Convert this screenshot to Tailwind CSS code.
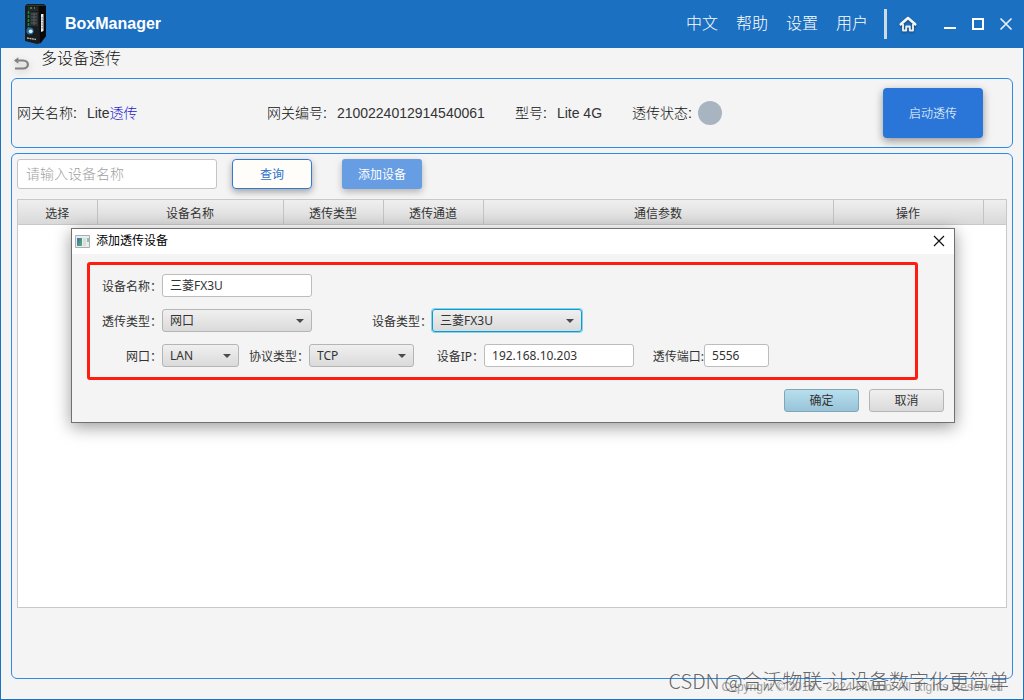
<!DOCTYPE html>
<html lang="zh-CN">
<head>
<meta charset="utf-8">
<meta name="viewport" content="width=device-width, initial-scale=1">
<title>BoxManager</title>
<script src="https://cdn.jsdelivr.net/npm/@tailwindcss/browser@4"></script>
</head>
<body class="relative flex min-h-screen flex-col border-x border-b border-[#1c70c1] bg-[#f4f4f4] font-['Liberation_Sans','Noto_Sans_CJK_SC',sans-serif] text-sm text-[#333]">
  <header class="flex h-12 shrink-0 items-center bg-[#1c70c1] pr-[9px] pl-6 text-white">
    <svg class="h-10 w-[21px]" viewBox="0 0 21 40" aria-hidden="true">
      <path d="M0 2 2 0h17l2 2v30l-5 7-4 1-12-3z" fill="#191b1d"/>
      <path d="M14 1l7 1v30l-6 7z" fill="#08090a"/>
      <path d="M2 1h17l1 1H1z" fill="#303537"/>
      <path d="M3 3h10v4H3z" fill="#24292b"/>
      <path d="M5 8h8v14H5z" fill="#2b3033"/>
      <path d="M6 10h6M6 13h6M6 16h6M6 19h6M9 9v12" stroke="#555c60"/>
      <path d="M3.500 7v17" stroke="#168a49" stroke-width="1.600" stroke-dasharray="3 1"/>
      <path d="M5 4h2M9 4h1" stroke="#52963a" stroke-width="1.500"/>
      <circle cx="5" cy="27" r="3.600" fill="#236fa9"/>
      <circle cx="5.700" cy="27.300" r="1.900" fill="#e2ebf3"/>
      <path d="M2 34l9 1.500" stroke="#b4babd" stroke-width="1.300" stroke-dasharray="2 .5"/>
      <path d="M16 10h2.500v17l-2.500 1z" fill="#ececec"/>
      <path d="M17.200 13v12" stroke="#59636a" stroke-width=".8" stroke-dasharray="1.500 1"/>
    </svg>
    <h1 class="ml-[19px] text-base font-bold">BoxManager</h1>
    <nav class="ml-auto flex items-center gap-[18px] text-base font-light">
      <a href="#">中文</a><a href="#">帮助</a><a href="#">设置</a><a href="#">用户</a>
    </nav>
    <span class="ml-4 h-[30px] w-[3px] bg-[#cbdbe8]"></span>
    <button class="ml-3 size-[18px]" aria-label="主页">
      <svg viewBox="0 0 18 18" class="size-[18px] drop-shadow-[0_1px_1px_#0006]"><path d="M1.800 9.300 9 3l7.200 6.300" fill="none" stroke="#f7f7f7" stroke-width="2.600" stroke-linecap="round" stroke-linejoin="round"/><path d="M4 9v6.500h3.200V11.500h3.600v4H14V9" fill="none" stroke="#ededed" stroke-width="1.900" stroke-linejoin="round"/></svg>
    </button>
    <button class="ml-[25px] size-4" aria-label="最小化"><svg viewBox="0 0 16 16" class="size-4"><path d="M2 12h12" stroke="#fff" stroke-width="2"/></svg></button>
    <button class="ml-3 size-4" aria-label="最大化"><svg viewBox="0 0 16 16" class="size-4"><path d="M3 3h10v10H3z" fill="none" stroke="#fff" stroke-width="2"/></svg></button>
    <button class="ml-3 size-4" aria-label="关闭窗口"><svg viewBox="0 0 16 16" class="size-4"><path d="m2.500 2.500 11 11m0-11-11 11" stroke="#e8eef5" stroke-width="1.700"/></svg></button>
  </header>

  <main class="flex grow flex-col px-[10px]">
    <div class="flex h-[30px] items-center">
      <button class="mt-1 size-5" aria-label="返回"><svg viewBox="0 0 20 20" class="size-5 drop-shadow-[0_2px_3px_#0003]"><path d="M4.500 5.500h7.500c6.500 0 6.500 8 0 8H4" fill="none" stroke="#808080" stroke-width="2.200"/><path d="M7.300 2.300 3 5.500l4.300 3.200z" fill="#808080"/></svg></button>
      <h2 class="mb-2 ml-[10px] text-base font-light text-[#111]">多设备透传</h2>
    </div>

    <section class="flex h-[70px] shrink-0 items-center rounded-md border border-[#2d8ae8] pr-[29px] pl-[5px] font-light">
      <dl class="flex items-center">
        <div class="flex w-[250px] gap-[10px]"><dt class="text-[#111]">网关名称:</dt><dd>Lite<span class="text-[#2318d0]">透传</span></dd></div>
        <div class="flex w-[248px] gap-[10px]"><dt class="text-[#111]">网关编号:</dt><dd>2100224012914540061</dd></div>
        <div class="flex w-[117px] gap-[10px]"><dt class="text-[#111]">型号:</dt><dd>Lite 4G</dd></div>
        <div class="flex items-center gap-[6px]"><dt class="text-[#111]">透传状态:</dt><dd class="size-6 rounded-full bg-[#a8b4c0]" aria-label="未启动"></dd></div>
      </dl>
      <button class="ml-auto h-[50px] w-[100px] rounded-sm bg-[#2a76d8] pt-[2px] text-xs text-white shadow-[0_3px_9px_#0006]">启动透传</button>
    </section>

    <section class="mt-[5px] mb-5 flex grow flex-col rounded-md border border-[#2d8ae8] px-[5px] pt-[5px] pb-[70px]">
      <form class="flex items-center">
        <input type="text" aria-label="设备名称" placeholder="请输入设备名称" class="h-[30px] w-[200px] rounded-[3px] border border-[#c4c4c4] bg-white px-2 text-sm font-light placeholder:text-[#a0a0a0]">
        <button type="button" class="ml-[15px] h-[30px] w-20 rounded border border-[#3179d5] bg-[#fffdfa] pt-[2px] text-xs text-[#2a70cc] shadow-[0_3px_7px_#0005]">查询</button>
        <button type="button" class="ml-[30px] h-[30px] w-20 rounded-[3px] bg-[#669de3] pt-[2px] text-xs text-white shadow-[0_3px_7px_#0004]">添加设备</button>
      </form>
      <div class="mt-[10px] grow border border-[#c8c8c8] bg-white">
        <table class="w-full table-fixed border-collapse text-xs">
          <colgroup><col class="w-[79px]"><col class="w-[186px]"><col class="w-[100px]"><col class="w-[100px]"><col><col class="w-[150px]"><col class="w-[23px]"></colgroup>
          <thead>
            <tr class="h-6 border-b border-[#c8c8c8] bg-linear-to-b from-[#efefef] to-[#d9d9d9] *:border-r *:border-[#c3c3c3] *:p-0 *:pt-1 *:leading-5 *:font-normal *:last:border-r-0">
              <th scope="col">选择</th><th scope="col">设备名称</th><th scope="col">透传类型</th><th scope="col">透传通道</th><th scope="col">通信参数</th><th scope="col">操作</th><td></td>
            </tr>
          </thead>
        </table>
      </div>
    </section>
  </main>

  <footer class="absolute right-5 bottom-1 text-xs leading-4 text-[#a5a5a5]">Copyright © 2018 - 2024 HiWoo. All Rights Reserved</footer>
  <p class="absolute right-[14px] bottom-1 font-['Noto_Sans_CJK_SC',sans-serif] text-[20px] leading-7 font-light whitespace-nowrap text-[#555]/90">CSDN @合沃物联-让设备数字化更简单</p>

  <section role="dialog" aria-labelledby="dialog-title" class="absolute top-[228px] right-[68px] left-[70px] border border-[#707070] bg-[#f4f4f4] font-['Noto_Sans','Noto_Sans_CJK_SC',sans-serif] text-xs shadow-[0_4px_16px_#0006]">
    <div class="flex h-[25px] items-center bg-white pr-2 pb-px pl-[3px] text-black">
      <svg class="h-[13px] w-[15px]" viewBox="0 0 15 13" aria-hidden="true"><defs><linearGradient id="pane" x2="1" y2="1"><stop stop-color="#3e6ea3"/><stop offset="1" stop-color="#58b472"/></linearGradient></defs><path d="M.5.5h14v12H.5z" fill="#e9edf0" stroke="#a9aeb3"/><path d="M2 3h5v8H2z" fill="url(#pane)"/><path d="M8 3h3v8H8z" fill="#dcdcdc"/><path d="M12 3h2v4h-2z" fill="#8cc4aa"/></svg>
      <h3 id="dialog-title" class="ml-[6px]">添加透传设备</h3>
      <button class="ml-auto size-[14px]" aria-label="关闭"><svg viewBox="0 0 14 14" class="size-[14px]"><path d="m2 2 10 10m0-10L2 12" stroke="#111" stroke-width="1.200"/></svg></button>
    </div>
    <form>
      <div class="mt-2 mr-9 ml-[15px] flex flex-col gap-3 rounded-[3px] border-[3px] border-[#ff1c10] pt-[9px] pb-[10px]">
        <div class="flex items-center">
          <label for="device-name" class="w-[72px] pt-[2px] text-right">设备名称：</label>
          <input id="device-name" type="text" value="三菱FX3U" class="h-[23px] w-[150px] rounded-[3px] border border-[#bcbcbc] bg-white px-[7px] pb-[2px]">
        </div>
        <div class="flex items-center">
          <label for="pass-type" class="w-[72px] pt-[2px] text-right">透传类型：</label>
          <div class="relative w-[150px]">
            <select id="pass-type" class="block h-[23px] w-full appearance-none rounded-[3px] border border-[#b5b5b5] bg-linear-to-b from-[#f0f0f0] to-[#dadada] px-[7px]"><option>网口</option></select>
            <svg class="pointer-events-none absolute top-[10px] right-2 h-1 w-2" viewBox="0 0 8 4"><path d="M0 0h8L4 4z" fill="#4a4a4a"/></svg>
          </div>
          <label for="device-type" class="ml-[60px] pt-[2px]">设备类型：</label>
          <div class="relative w-[150px]">
            <select id="device-type" class="block h-[23px] w-full appearance-none rounded-[3px] border border-[#039ed3] bg-linear-to-b from-[#f0f0f0] to-[#dadada] px-[7px] shadow-[0_0_0_1px_#8bd0e8]"><option>三菱FX3U</option></select>
            <svg class="pointer-events-none absolute top-[10px] right-2 h-1 w-2" viewBox="0 0 8 4"><path d="M0 0h8L4 4z" fill="#4a4a4a"/></svg>
          </div>
        </div>
        <div class="flex items-center whitespace-nowrap">
          <label for="port" class="w-[72px] pt-[2px] text-right">网口：</label>
          <div class="relative w-[77px]">
            <select id="port" class="block h-[23px] w-full appearance-none rounded-[3px] border border-[#b5b5b5] bg-linear-to-b from-[#f0f0f0] to-[#dadada] px-[7px]"><option>LAN</option></select>
            <svg class="pointer-events-none absolute top-[10px] right-2 h-1 w-2" viewBox="0 0 8 4"><path d="M0 0h8L4 4z" fill="#4a4a4a"/></svg>
          </div>
          <label for="protocol" class="ml-[10px] pt-[2px]">协议类型：</label>
          <div class="relative w-[105px]">
            <select id="protocol" class="block h-[23px] w-full appearance-none rounded-[3px] border border-[#b5b5b5] bg-linear-to-b from-[#f0f0f0] to-[#dadada] px-[7px]"><option>TCP</option></select>
            <svg class="pointer-events-none absolute top-[10px] right-2 h-1 w-2" viewBox="0 0 8 4"><path d="M0 0h8L4 4z" fill="#4a4a4a"/></svg>
          </div>
          <label for="ip" class="w-[70px] pt-[2px] text-right">设备IP：</label>
          <input id="ip" type="text" value="192.168.10.203" class="h-[23px] w-[150px] rounded-[3px] border border-[#bcbcbc] bg-white px-[7px]">
          <label for="pass-port" class="w-[70px] pt-[2px] text-right">透传端口:</label>
          <input id="pass-port" type="text" value="5556" class="h-[23px] w-[65px] rounded-[3px] border border-[#bcbcbc] bg-white px-[7px]">
        </div>
      </div>
      <div class="mt-[9px] mr-[10px] mb-[10px] flex justify-end gap-[10px]">
        <button type="button" class="h-[23px] w-[75px] rounded-[3px] border border-[#7fa7b8] bg-linear-to-b from-[#b8dfee] to-[#98c3d8]">确定</button>
        <button type="button" class="h-[23px] w-[75px] rounded-[3px] border border-[#b5b5b5] bg-linear-to-b from-[#f0f0f0] to-[#dadada]">取消</button>
      </div>
    </form>
  </section>
</body>
</html>
